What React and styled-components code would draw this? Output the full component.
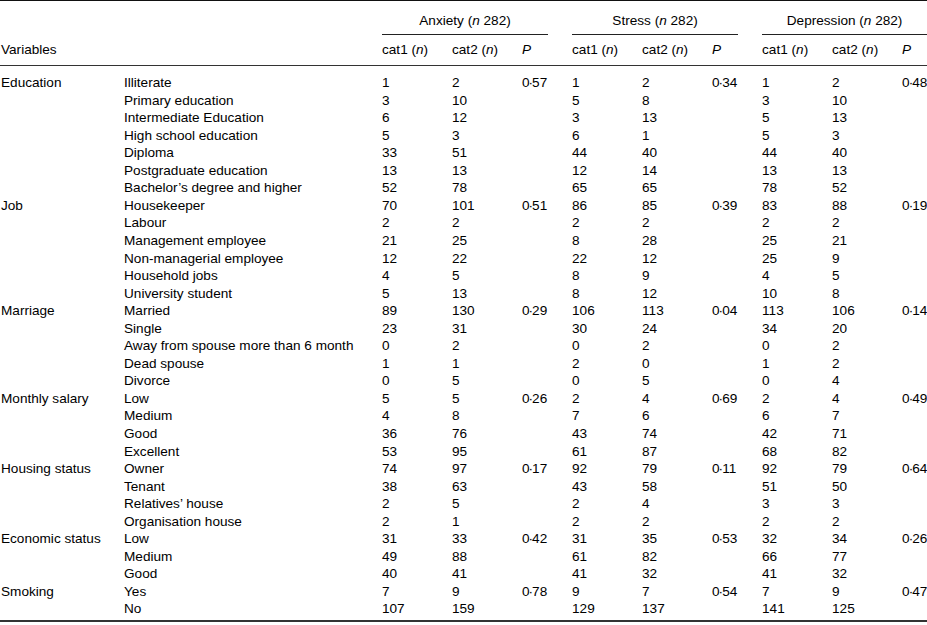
import styled, { createGlobalStyle } from "styled-components";

const GlobalStyle = createGlobalStyle`
  html, body {
    margin: 0;
    padding: 0;
    background: #fff;
  }
  body {
    font-family: "Liberation Sans", Arial, sans-serif;
    color: #000;
  }
`;

const groups = ["Anxiety", "Stress", "Depression"];

const sections = [
  {
    name: "Education",
    p: ["0·57", "0·34", "0·48"],
    rows: [
      ["Illiterate", 1, 2, 1, 2, 1, 2],
      ["Primary education", 3, 10, 5, 8, 3, 10],
      ["Intermediate Education", 6, 12, 3, 13, 5, 13],
      ["High school education", 5, 3, 6, 1, 5, 3],
      ["Diploma", 33, 51, 44, 40, 44, 40],
      ["Postgraduate education", 13, 13, 12, 14, 13, 13],
      ["Bachelor’s degree and higher", 52, 78, 65, 65, 78, 52],
    ],
  },
  {
    name: "Job",
    p: ["0·51", "0·39", "0·19"],
    rows: [
      ["Housekeeper", 70, 101, 86, 85, 83, 88],
      ["Labour", 2, 2, 2, 2, 2, 2],
      ["Management employee", 21, 25, 8, 28, 25, 21],
      ["Non-managerial employee", 12, 22, 22, 12, 25, 9],
      ["Household jobs", 4, 5, 8, 9, 4, 5],
      ["University student", 5, 13, 8, 12, 10, 8],
    ],
  },
  {
    name: "Marriage",
    p: ["0·29", "0·04", "0·14"],
    rows: [
      ["Married", 89, 130, 106, 113, 113, 106],
      ["Single", 23, 31, 30, 24, 34, 20],
      ["Away from spouse more than 6 month", 0, 2, 0, 2, 0, 2],
      ["Dead spouse", 1, 1, 2, 0, 1, 2],
      ["Divorce", 0, 5, 0, 5, 0, 4],
    ],
  },
  {
    name: "Monthly salary",
    p: ["0·26", "0·69", "0·49"],
    rows: [
      ["Low", 5, 5, 2, 4, 2, 4],
      ["Medium", 4, 8, 7, 6, 6, 7],
      ["Good", 36, 76, 43, 74, 42, 71],
      ["Excellent", 53, 95, 61, 87, 68, 82],
    ],
  },
  {
    name: "Housing status",
    p: ["0·17", "0·11", "0·64"],
    rows: [
      ["Owner", 74, 97, 92, 79, 92, 79],
      ["Tenant", 38, 63, 43, 58, 51, 50],
      ["Relatives’ house", 2, 5, 2, 4, 3, 3],
      ["Organisation house", 2, 1, 2, 2, 2, 2],
    ],
  },
  {
    name: "Economic status",
    p: ["0·42", "0·53", "0·26"],
    rows: [
      ["Low", 31, 33, 31, 35, 32, 34],
      ["Medium", 49, 88, 61, 82, 66, 77],
      ["Good", 40, 41, 41, 32, 41, 32],
    ],
  },
  {
    name: "Smoking",
    p: ["0·78", "0·54", "0·47"],
    rows: [
      ["Yes", 7, 9, 9, 7, 7, 9],
      ["No", 107, 159, 129, 137, 141, 125],
    ],
  },
];

const Table = styled.table`
  width: 927px;
  table-layout: fixed;
  border-collapse: separate;
  border-spacing: 0;
  border-top: 1px solid #111;
  border-bottom: 2px solid #333;
  font-size: 13.6px;
  line-height: 17.55px;
`;

const Col = styled.col`
  width: ${(p) => p.$w}px;
`;

const GroupCell = styled.th`
  padding: 10.5px 0 0;
  font-weight: normal;
  text-align: left;
`;

const GroupTitle = styled.div`
  padding-bottom: 4.5px;
  border-bottom: 1px solid #222;
  text-align: center;
  white-space: nowrap;
`;

const HeadCell = styled.th`
  padding: 6px 0 6.8px ${(p) => (p.$first ? 1 : 0)}px;
  font-weight: normal;
  text-align: left;
  white-space: nowrap;
  border-bottom: 1.5px solid #333;
`;

const Cell = styled.td`
  padding: 0 0 0 ${(p) => (p.$first ? 1 : 0)}px;
  height: 17.55px;
  white-space: nowrap;
  vertical-align: middle;

  tbody tr:first-child > & {
    padding-top: 8.2px;
  }
  tbody tr:last-child > & {
    padding-bottom: 1.5px;
  }
`;

const Dot = styled.span`
  margin: 0 -1px;
`;

const widths = [124, 258, 70, 70, 26, 24, 70, 70, 26, 24, 70, 70, 25];

const NCat = ({ k }) => (
  <>
    cat{k} (<i>n</i>)
  </>
);

const PValue = ({ v }) => {
  if (!v) return null;
  const [a, b] = v.split("·");
  return (
    <>
      {a}
      <Dot>·</Dot>
      {b}
    </>
  );
};

const App = () => {
  return (
    <>
      <GlobalStyle />
      <Table>
        <colgroup>
          {widths.map((w, i) => (
            <Col key={i} $w={w} />
          ))}
        </colgroup>
        <thead>
          <tr>
            <GroupCell colSpan={2} />
            {groups.map((g, i) => [
              <GroupCell key={g} colSpan={3}>
                <GroupTitle>
                  {g} (<i>n</i> 282)
                </GroupTitle>
              </GroupCell>,
              i < 2 && <GroupCell key={g + "-gap"} />,
            ])}
          </tr>
          <tr>
            <HeadCell $first>Variables</HeadCell>
            <HeadCell />
            {groups.map((g, i) => [
              <HeadCell key={g + "1"}>
                <NCat k={1} />
              </HeadCell>,
              <HeadCell key={g + "2"}>
                <NCat k={2} />
              </HeadCell>,
              <HeadCell key={g + "p"}>
                <i>P</i>
              </HeadCell>,
              i < 2 && <HeadCell key={g + "gap"} />,
            ])}
          </tr>
        </thead>
        <tbody>
          {sections.flatMap((s) =>
            s.rows.map((r, j) => (
              <tr key={s.name + r[0]}>
                <Cell $first>{j === 0 ? s.name : ""}</Cell>
                <Cell>{r[0]}</Cell>
                <Cell>{r[1]}</Cell>
                <Cell>{r[2]}</Cell>
                <Cell>
                  <PValue v={j === 0 && s.p[0]} />
                </Cell>
                <Cell />
                <Cell>{r[3]}</Cell>
                <Cell>{r[4]}</Cell>
                <Cell>
                  <PValue v={j === 0 && s.p[1]} />
                </Cell>
                <Cell />
                <Cell>{r[5]}</Cell>
                <Cell>{r[6]}</Cell>
                <Cell>
                  <PValue v={j === 0 && s.p[2]} />
                </Cell>
              </tr>
            ))
          )}
        </tbody>
      </Table>
    </>
  );
};

export default App;
